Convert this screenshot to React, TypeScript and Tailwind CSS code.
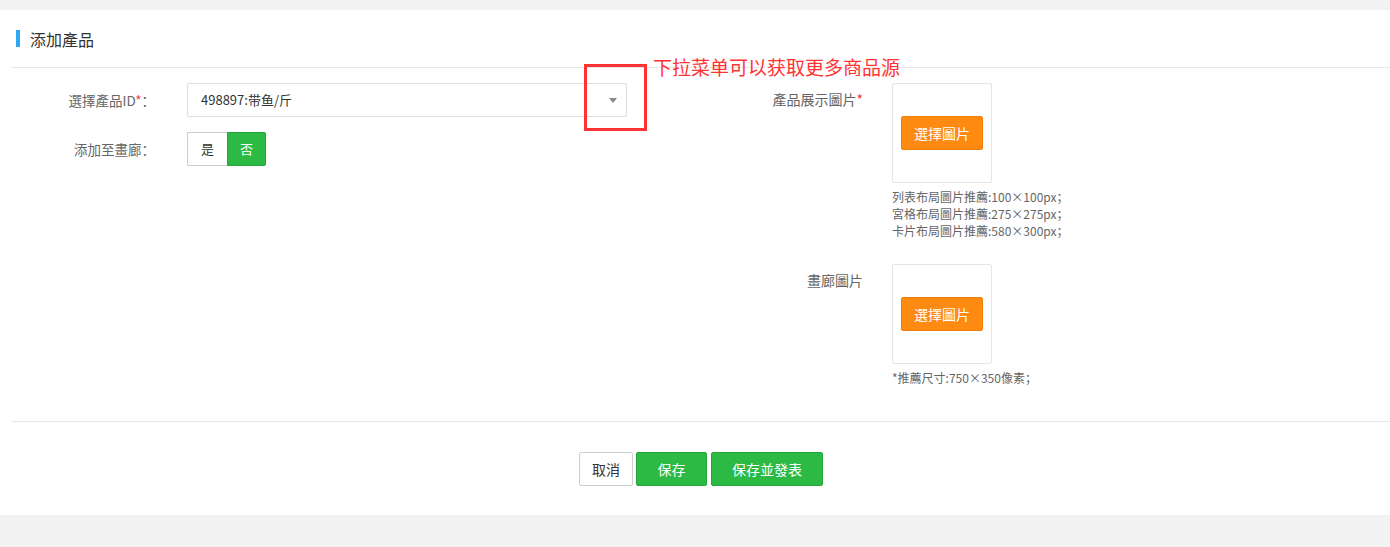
import { useState } from 'react';

const font = { fontFamily: '"Noto Sans CJK SC", "Liberation Sans", sans-serif' };

function UploadBox({ hints }: { hints: string[] }) {
  return (
    <div>
      <div className="w-[100px] h-[100px] border border-[#e5e5e5] rounded-[2px] flex items-center justify-center bg-white">
        <button className="w-[82px] h-[34px] bg-[#ff8a12] border border-[#f08010] rounded-[2px] text-white text-[14px]">
          選擇圖片
        </button>
      </div>
      <div className="mt-[5px] text-[12px] leading-[17px] text-[#666]">
        {hints.map((h) => (
          <p key={h}>{h}</p>
        ))}
      </div>
    </div>
  );
}

export default function App() {
  const [gallery, setGallery] = useState(false);

  return (
    <div className="min-h-[547px] bg-[#f2f2f2] pt-[10px] pb-[32px]" style={font}>
      <div className="relative bg-white">
        {/* header */}
        <div className="h-[57px] flex items-center pl-[16px]">
          <span className="w-[4px] h-[17px] bg-[#2ea8f5] mr-[10px]" />
          <h1 className="text-[16px] text-[#333]">添加產品</h1>
        </div>
        <div className="ml-[11px] border-t border-[#e8e8e8]" />

        {/* form */}
        <div className="flex pt-[15px] h-[353px]">
          <div className="w-[660px] flex flex-col gap-[15px]">
            <div className="flex items-center">
              <label className="w-[155px] text-right text-[13.5px] text-[#666]">
                選擇產品ID<span className="text-[#f33]">*</span>：
              </label>
              <div className="ml-[32px] w-[440px] h-[34px] border border-[#ddd] rounded-[2px] flex items-center justify-between pl-[13px] pr-[9px]">
                <span className="text-[13px] text-[#333]">498897:带鱼/斤</span>
                <span className="w-0 h-0 border-l-[4px] border-r-[4px] border-t-[5px] border-l-transparent border-r-transparent border-t-[#888]" />
              </div>
            </div>
            <div className="flex items-center">
              <label className="w-[155px] text-right text-[13.5px] text-[#666]">添加至畫廊：</label>
              <div className="ml-[32px] flex h-[34px]">
                <button
                  onClick={() => setGallery(true)}
                  className={
                    gallery
                      ? 'w-[40px] bg-[#2cb944] border border-[#25a53b] text-white text-[13px] rounded-l-[2px]'
                      : 'w-[40px] bg-white border border-[#ccc] border-r-0 text-[#333] text-[13px] rounded-l-[2px]'
                  }
                >
                  是
                </button>
                <button
                  onClick={() => setGallery(false)}
                  className={
                    gallery
                      ? 'w-[39px] bg-white border border-[#ccc] border-l-0 text-[#333] text-[13px] rounded-r-[2px]'
                      : 'w-[39px] bg-[#2cb944] border border-[#25a53b] text-white text-[13px] rounded-r-[2px]'
                  }
                >
                  否
                </button>
              </div>
            </div>
          </div>

          <div className="flex flex-col gap-[25px]">
            <div className="flex">
              <label className="w-[203px] text-right text-[14px] text-[#666] pt-[6px]">
                產品展示圖片<span className="text-[#f33]">*</span>
              </label>
              <div className="ml-[29px]">
                <UploadBox
                  hints={[
                    '列表布局圖片推薦:100×100px；',
                    '宮格布局圖片推薦:275×275px；',
                    '卡片布局圖片推薦:580×300px；',
                  ]}
                />
              </div>
            </div>
            <div className="flex">
              <label className="w-[203px] text-right text-[14px] text-[#666] pt-[6px]">畫廊圖片</label>
              <div className="ml-[29px]">
                <UploadBox hints={['*推薦尺寸:750×350像素；']} />
              </div>
            </div>
          </div>
        </div>

        <div className="ml-[11px] border-t border-[#e8e8e8]" />

        {/* actions */}
        <div className="flex justify-center gap-[3px] pt-[30px] pb-[29px] pl-[12px]">
          <button className="w-[54px] h-[34px] bg-white border border-[#ccc] rounded-[2px] text-[14px] text-[#333]">
            取消
          </button>
          <button className="w-[71px] h-[34px] bg-[#2cb944] border border-[#25a53b] rounded-[2px] text-[14px] text-white">
            保存
          </button>
          <button className="ml-[1px] w-[112px] h-[34px] bg-[#2cb944] border border-[#25a53b] rounded-[2px] text-[14px] text-white">
            保存並發表
          </button>
        </div>

        {/* annotation overlay */}
        <div className="absolute left-[584px] top-[54px] w-[63px] h-[67px] border-[3px] border-[#f33]" />
        <div className="absolute left-[653px] top-[45px] text-[19px] leading-[24px] text-[#f33]">
          下拉菜单可以获取更多商品源
        </div>
      </div>
    </div>
  );
}
